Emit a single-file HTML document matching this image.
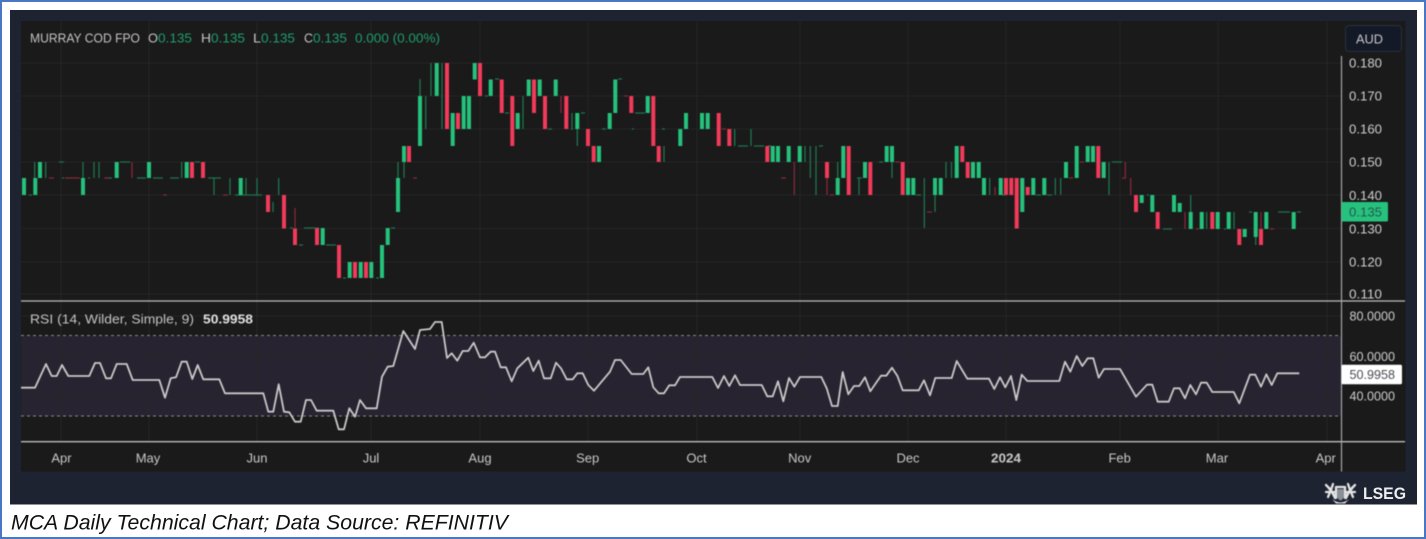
<!DOCTYPE html>
<html><head><meta charset="utf-8"><style>
html,body{margin:0;padding:0;background:#fff;width:1426px;height:539px;overflow:hidden}
svg{display:block;font-family:"Liberation Sans",sans-serif}
</style></head><body>
<svg width="1426" height="539" viewBox="0 0 1426 539" xmlns="http://www.w3.org/2000/svg">
<rect width="1426" height="539" fill="#fff"/>
<rect x="1" y="1" width="1424" height="537" fill="none" stroke="#4a76c6" stroke-width="2"/>
<rect x="10" y="10" width="1407" height="494.500" fill="#1d2330"/>
<rect x="21" y="21" width="1384.500" height="450.500" fill="#1a1a1a"/>
<g style="filter:blur(0.45px)">
<rect x="21" y="336" width="1320" height="80" fill="#282330"/>
<path d="M61 21V441M149 21V441M257 21V441M371 21V441M480 21V441M588 21V441M697 21V441M800 21V441M908 21V441M1006 21V441M1120 21V441M1218 21V441M1327 21V441M21 63H1341M21 96H1341M21 129H1341M21 162H1341M21 195H1341M21 228.500H1341M21 262H1341M21 294H1341M21 316H1341M21 356H1341M21 396H1341" stroke="#262626" stroke-width="1" fill="none"/>
<path d="M21 335.500H1341M21 416H1341" stroke="#8a8a8a" stroke-width="1" stroke-dasharray="3 3" fill="none"/>

<!-- thin green wicks / dojis -->
<path fill="none" stroke="#1f7350" stroke-width="1.300" d="M34.700 162V178M45.700 162V178M83 162V178M94 162V178M99 162V178M181.700 162V178M214 178V195M230 178V195M246 178V195M257 178V195M278.700 178V195M273 202V212M398 162V178M404 162V178M420 79V96M425.700 96V129M431 63V96M442 63V129M523 96V129M572 113V129M577.300 129V146M664 146V162M734.700 129V146M751 129V146M805 146V162M810.300 146V178M816 146V195M837.700 162V178M859 178V195M892 162V178M924.300 178V228M935 195V212M946 162V178M951.500 162V178M989.700 178V195M1055.300 178V195M1060.700 178V195M1109 162V195M1190.700 195V212M1206.700 212V229M1234 212V229M1255.700 237V245
M59 162H64M120 162H125M125 162H130M195 162H200M29 195H32M137 178H146M153 178H163M170 178H179M208 178H221M88 178H90M235 195H262M485 96H488M495 79H499M505 113H509M548 129H552M581 113H585M602 129H606M618 79H622M635 113H645M662 129H665M632 129H634M571 129H573M768 146H771M738 146H748M754 146H764M819 146H823M857 178H862M879 162H883M916 195H921M1002 195H1005M1036 195H1041M1047 195H1052M1112 162H1122M1147 195H1149M1163 229H1172M1224 229H1226M1249 212H1252M1278 212H1290M1297 212H1301M62 178H64M106 178H112M317 228H319M290 228H293M304 228H316M326 245H336M299 245H303M376 278H379M391 228H395M343 278H346"/>

<!-- thin red -->
<path fill="none" stroke="#84283b" stroke-width="1.300" d="M132 162V178M295 208V228M561 96V113M794.300 162V195M827 178V195M995 187V195M1125.300 162V178M1130.700 178V195M1185 212V229M1261 212V229
M49 178H54M65 178H80M104 178H109M163 195H167M223 195H228M413 178H417M624 96H628M722 129H726M781 178H786M830 195H834M895 162H900M927 212H932M1069 178H1073M1080 162H1084M1122 178H1126M1196 229H1199M1270 229H1274"/>

<!-- green bodies -->
<path fill="none" stroke="#25c27c" stroke-width="4" d="M24 178V195M35.300 178V195M40 162V178M83 178V195M116.700 162V178M149 162V178M186.700 162V178M240.700 178V195M322.700 228V245M349.700 262V278M360.700 262V278M371.300 262V278M382 245V278M387.700 228V245M398 178V212M404 146V162M420 96V146M436.700 63V96M452.700 113V146M463.700 96V129M469 96V129M474.700 63V79.500M490.700 79.500V96M517.700 113V129M528.700 79.500V96M539.700 79.500V96M555.700 79.500V96M577.300 113V129M599 146V162M609.700 113V129M615.300 79.500V113M647.700 96V113M680.300 129V146M686 113V129M702 113V129M707.700 113V129M772.700 146V162M778 146V162M788.700 146V162M799.700 146V162M837.700 178V195M843.300 146V178M865 162V178M886.700 146V162M892 146V162M908 178V195M913.300 178V195M935 178V195M940.700 178V195M956.700 146V178M973 162V178M978.700 162V178M984 178V195M1000.700 178V195M1022.300 178V212M1033.300 178V195M1044.300 178V195M1066 162V178M1076.700 146V178M1087.700 146V162M1093 146V162M1103.700 162V178M1141.700 195V203M1152.300 195V212M1174 195V212M1179.700 203V212M1190.700 212V229M1201.700 212V229M1217.700 212V229M1228.700 212V229M1244.700 229V237M1255.700 212V237M1266.300 212V229M1293.700 212V229"/>

<!-- red bodies -->
<path fill="none" stroke="#f23a5a" stroke-width="4" d="M192 162V178M203 162V178M268 195V212M284 195V228.500M295 228.500V245M317 228V245M339 245V278M355 262V278M366 262V278M409 146V162M447 63V129M458 113V129M480 63V96M501.700 79.500V113M512.300 96V146M534 79.500V113M545 96V129M566.300 96V129M588 129V146M593.700 146V162M631.300 96V113M653.300 96V146M658.700 146V162M718.700 113V146M729.300 129V146M767.300 146V162M827 162V178M848.700 146V195M870.300 162V195M902.700 162V195M962.300 146V162M967.700 162V178M1006 178V195M1011.300 178V195M1016.700 178V228.500M1027.700 187V195M1098.300 146V178M1136 195V212M1157.700 212V229M1212.300 212V229M1239.300 229V245M1261 229V245"/>

<!-- RSI line -->
<polyline fill="none" stroke="#c8c8c8" stroke-width="1.800" stroke-linejoin="round" points="21,387.700 35,387.700 46,364 51.700,376 56.700,376 62,365 68.300,376 89.300,376 95,363 100,363 106,378.300 111,378.300 116.700,364 126.700,364 132.700,380 159.300,380 165,397.700 170.700,378.300 176,377.300 181.700,361.700 186.700,361.700 192.300,379 197.700,365 203.300,379.300 219.300,379.300 225,393.300 263.300,393.300 268.300,411.700 273.300,411.700 278.700,384.300 284,411.700 289.300,412.300 295,421.700 300.700,421.700 306,400 311,400 316.700,410.700 333.300,410.700 338.700,429.300 344,429.300 349.300,408.300 355,416.700 360,400 366,408.300 376.700,408.300 382,376.700 387.700,366.700 393.300,366 399,346 403.300,331 415,349 420,330 430,329 435,322 441.700,322 447,358 451.700,353.300 457.300,360.700 462.700,351 468.300,351 473.700,342.700 480,357.300 485,357.300 490.700,351.700 495,351.700 500.700,367.300 506,367.300 511.700,381.300 517.300,368.300 528.300,357.700 533.300,371 538.700,360.700 544,378.300 550.700,378.300 556,362.700 561,368.300 566.700,379.300 572.700,379.300 577.300,373.300 582.700,373.300 588.300,385 594,390.700 610,371.700 615,360 620.700,360 631.700,374 643.300,374 648.300,367.300 653.300,387.300 658.700,393.300 664,393.300 669.300,385.300 675,385.300 680,377 712.300,377 718,388 724,376 729.300,386 735,375.300 740,385 761.700,385 767.300,396.300 772.700,396.300 778,381.300 783.300,401.300 789,378 794.300,386.700 800,377 821.300,377 826.700,388.300 832,406 837.700,406 842.700,372 848.300,394.300 854,386 859.300,386 865,377.300 870.300,391.300 881,375.700 886.300,375.700 892,367.700 897.300,375.700 902.700,390.300 918.700,390.300 924,380.300 930,395.300 935.300,378 951.700,378 956.700,361 967.300,378.700 989,378.700 994.300,389 1000,377.300 1005.300,387.300 1011,376 1016.300,400 1021.700,374.700 1027.300,381 1059.300,381 1065,361.700 1070.300,371.700 1076.700,356 1082.300,366 1087.700,358.300 1093.300,358.300 1098.700,377.700 1104,369 1120,369 1136,396.700 1147,384.700 1152.300,384.700 1157.700,401.700 1168.700,401.700 1174,388.300 1179.700,388.300 1185,398.300 1190.300,385 1196,394.300 1201,382.700 1206.700,382.700 1212.300,392 1233.700,392 1239.300,403.300 1250,374.700 1255.300,374.700 1261,386.700 1266.300,374.300 1271.700,385 1277.300,373.300 1299.300,373.300"/>

<!-- separators and axes -->
<path d="M21 301H1405M21 441.700H1405" stroke="#bdbdbd" stroke-width="1.300" fill="none"/>
<path d="M1341.500 56V471.500" stroke="#a8a8a8" stroke-width="1.200" fill="none"/>

<!-- legend -->
<g font-size="13">
<text x="30" y="42.600" fill="#c4c4c4" textLength="110" lengthAdjust="spacingAndGlyphs">MURRAY COD FPO</text>
<text x="148" y="42.600" fill="#c4c4c4" textLength="10" lengthAdjust="spacingAndGlyphs">O</text><text x="158" y="42.600" fill="#1f9e6f" textLength="34" lengthAdjust="spacingAndGlyphs">0.135</text>
<text x="201" y="42.600" fill="#c4c4c4" textLength="10" lengthAdjust="spacingAndGlyphs">H</text><text x="211" y="42.600" fill="#1f9e6f" textLength="34" lengthAdjust="spacingAndGlyphs">0.135</text>
<text x="253" y="42.600" fill="#c4c4c4" textLength="8" lengthAdjust="spacingAndGlyphs">L</text><text x="261" y="42.600" fill="#1f9e6f" textLength="34" lengthAdjust="spacingAndGlyphs">0.135</text>
<text x="304" y="42.600" fill="#c4c4c4" textLength="9" lengthAdjust="spacingAndGlyphs">C</text><text x="313" y="42.600" fill="#1f9e6f" textLength="34" lengthAdjust="spacingAndGlyphs">0.135</text>
<text x="355" y="42.600" fill="#1f9e6f" textLength="85" lengthAdjust="spacingAndGlyphs">0.000 (0.00%)</text>
<text x="30" y="323.600" fill="#c4c4c4" textLength="164" lengthAdjust="spacingAndGlyphs">RSI (14, Wilder, Simple, 9)</text>
<text x="203" y="323.600" fill="#e2e2e2" font-weight="bold" textLength="50" lengthAdjust="spacingAndGlyphs">50.9958</text>
</g>

<!-- AUD button -->
<rect x="1345.500" y="25.500" width="56" height="26" rx="3.500" fill="#141927" stroke="#2a2f3c"/>
<text x="1356" y="43.500" font-size="13" fill="#c6c6cc" textLength="27" lengthAdjust="spacingAndGlyphs">AUD</text>

<!-- price axis -->
<g font-size="13" fill="#cfcfcf">
<text x="1349" y="67.600" textLength="33" lengthAdjust="spacingAndGlyphs">0.180</text>
<text x="1349" y="100.600" textLength="33" lengthAdjust="spacingAndGlyphs">0.170</text>
<text x="1349" y="133.600" textLength="33" lengthAdjust="spacingAndGlyphs">0.160</text>
<text x="1349" y="166.600" textLength="33" lengthAdjust="spacingAndGlyphs">0.150</text>
<text x="1349" y="200" textLength="33" lengthAdjust="spacingAndGlyphs">0.140</text>
<text x="1349" y="233.300" textLength="33" lengthAdjust="spacingAndGlyphs">0.130</text>
<text x="1349" y="266.300" textLength="33" lengthAdjust="spacingAndGlyphs">0.120</text>
<text x="1349" y="298.600" textLength="33" lengthAdjust="spacingAndGlyphs">0.110</text>
<text x="1349.500" y="320.600" textLength="45.500" lengthAdjust="spacingAndGlyphs">80.0000</text>
<text x="1349.500" y="361" textLength="45.500" lengthAdjust="spacingAndGlyphs">60.0000</text>
<text x="1349.500" y="400.700" textLength="45.500" lengthAdjust="spacingAndGlyphs">40.0000</text>
</g>
<rect x="1341.500" y="202" width="46.500" height="19.500" rx="1.500" fill="#26c27d"/>
<text x="1349" y="216.500" font-size="13" fill="#245a4c" textLength="33" lengthAdjust="spacingAndGlyphs">0.135</text>
<rect x="1341.500" y="364.700" width="60.500" height="19.500" rx="1.500" fill="#fff"/>
<text x="1349.500" y="379.100" font-size="13" fill="#4a4a52" textLength="45.500" lengthAdjust="spacingAndGlyphs">50.9958</text>

<!-- time axis -->
<g font-size="13" fill="#c9c9c9" text-anchor="middle">
<text x="61.500" y="462.600">Apr</text><text x="148" y="462.600">May</text><text x="257" y="462.600">Jun</text><text x="371" y="462.600">Jul</text>
<text x="480" y="462.600">Aug</text><text x="587.700" y="462.600">Sep</text><text x="696.500" y="462.600">Oct</text><text x="799.700" y="462.600">Nov</text>
<text x="908" y="462.600">Dec</text><text x="1006" y="462.600" font-weight="bold" textLength="30" lengthAdjust="spacingAndGlyphs">2024</text><text x="1119.700" y="462.600">Feb</text><text x="1217" y="462.600">Mar</text><text x="1325.700" y="462.600">Apr</text>
</g>

<!-- LSEG crest -->
<g fill="none" stroke="#e4e4e4" stroke-width="2.300" stroke-linecap="round">
<path d="M1326 485L1331 490L1328 497M1333 484L1331 490L1335 498M1326 492H1335M1328 487L1334 495"/>
<path d="M1355 485L1350 490L1353 497M1348 484L1350 490L1346 498M1346 492H1355M1353 487L1347 495"/>
<path d="M1336 487H1345M1336 487V498M1345 487V498"/>
</g>
<path d="M1337 489H1344V497Q1340.500 504 1337 497Z" fill="#8a8f96"/>
<path d="M1332 499Q1340.500 506 1349 499L1345 503.500H1336Z" fill="#e4e4e4"/>
</g>
<text x="1363" y="499" font-size="17" font-weight="bold" fill="#eceef0" textLength="43" lengthAdjust="spacingAndGlyphs">LSEG</text>

<!-- caption -->
<text x="11" y="529.500" font-size="21.500" font-style="italic" fill="#111" textLength="497" lengthAdjust="spacingAndGlyphs">MCA Daily Technical Chart; Data Source: REFINITIV</text>
</svg>
</body></html>
